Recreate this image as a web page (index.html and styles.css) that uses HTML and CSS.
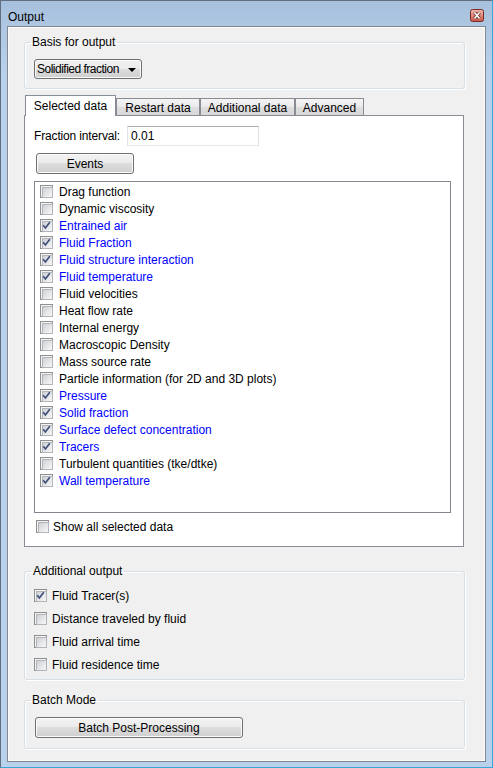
FILE: index.html
```html
<!DOCTYPE html>
<html>
<head>
<meta charset="utf-8">
<title>Output</title>
<link rel="stylesheet" href="styles.css">
</head>
<body>
<div class="window">
  <div class="titlebar">
    <span class="title">Output</span>
    <span class="close">
      <svg width="14" height="13" viewBox="0 0 14 13">
        <defs>
          <linearGradient id="cg" x1="0" y1="0" x2="0" y2="1">
            <stop offset="0" stop-color="#efb8ad"/>
            <stop offset="0.5" stop-color="#dd8a7d"/>
            <stop offset="1" stop-color="#c65446"/>
          </linearGradient>
        </defs>
        <rect x="0.5" y="0.5" width="13" height="12" rx="2" fill="url(#cg)" stroke="#7a2b22"/>
        <path d="M4.5 3.5 L9.5 9.5 M9.5 3.5 L4.5 9.5" stroke="#6a2a22" stroke-width="3.2"/>
        <path d="M4.5 3.5 L9.5 9.5 M9.5 3.5 L4.5 9.5" stroke="#ffffff" stroke-width="1.6"/>
      </svg>
    </span>
  </div>
  <div class="content">
    <fieldset class="group basis">
      <legend>Basis for output</legend>
      <div class="combo"><span class="combo-text">Solidified fraction</span><span class="arrow"></span></div>
    </fieldset>

    <div class="tabs">
      <div class="tab active t1">Selected data</div>
      <div class="tab t2">Restart data</div>
      <div class="tab t3">Additional data</div>
      <div class="tab t4">Advanced</div>
    </div>
    <div class="panel">
      <div class="field-row">
        <span class="label">Fraction interval:</span>
        <div class="input">0.01</div>
      </div>
      <button class="btn events">Events</button>
      <div class="list">
        <div class="item"><span class="cb"></span>Drag function</div>
        <div class="item"><span class="cb"></span>Dynamic viscosity</div>
        <div class="item on"><span class="cb"><svg class="tick" viewBox="0 0 13 13"><path d="M3.2 6.3 L5.4 9 L9.8 3.2"/></svg></span>Entrained air</div>
        <div class="item on"><span class="cb"><svg class="tick" viewBox="0 0 13 13"><path d="M3.2 6.3 L5.4 9 L9.8 3.2"/></svg></span>Fluid Fraction</div>
        <div class="item on"><span class="cb"><svg class="tick" viewBox="0 0 13 13"><path d="M3.2 6.3 L5.4 9 L9.8 3.2"/></svg></span>Fluid structure interaction</div>
        <div class="item on"><span class="cb"><svg class="tick" viewBox="0 0 13 13"><path d="M3.2 6.3 L5.4 9 L9.8 3.2"/></svg></span>Fluid temperature</div>
        <div class="item"><span class="cb"></span>Fluid velocities</div>
        <div class="item"><span class="cb"></span>Heat flow rate</div>
        <div class="item"><span class="cb"></span>Internal energy</div>
        <div class="item"><span class="cb"></span>Macroscopic Density</div>
        <div class="item"><span class="cb"></span>Mass source rate</div>
        <div class="item"><span class="cb"></span>Particle information (for 2D and 3D plots)</div>
        <div class="item on"><span class="cb"><svg class="tick" viewBox="0 0 13 13"><path d="M3.2 6.3 L5.4 9 L9.8 3.2"/></svg></span>Pressure</div>
        <div class="item on"><span class="cb"><svg class="tick" viewBox="0 0 13 13"><path d="M3.2 6.3 L5.4 9 L9.8 3.2"/></svg></span>Solid fraction</div>
        <div class="item on"><span class="cb"><svg class="tick" viewBox="0 0 13 13"><path d="M3.2 6.3 L5.4 9 L9.8 3.2"/></svg></span>Surface defect concentration</div>
        <div class="item on"><span class="cb"><svg class="tick" viewBox="0 0 13 13"><path d="M3.2 6.3 L5.4 9 L9.8 3.2"/></svg></span>Tracers</div>
        <div class="item"><span class="cb"></span>Turbulent quantities (tke/dtke)</div>
        <div class="item on"><span class="cb"><svg class="tick" viewBox="0 0 13 13"><path d="M3.2 6.3 L5.4 9 L9.8 3.2"/></svg></span>Wall temperature</div>
      </div>
      <div class="check show-all"><span class="cb"></span>Show all selected data</div>
    </div>

    <fieldset class="group additional">
      <legend>Additional output</legend>
      <div class="check"><span class="cb"><svg class="tick" viewBox="0 0 13 13"><path d="M3.2 6.3 L5.4 9 L9.8 3.2"/></svg></span>Fluid Tracer(s)</div>
      <div class="check"><span class="cb"></span>Distance traveled by fluid</div>
      <div class="check"><span class="cb"></span>Fluid arrival time</div>
      <div class="check"><span class="cb"></span>Fluid residence time</div>
    </fieldset>

    <fieldset class="group batch">
      <legend>Batch Mode</legend>
      <button class="btn batch-btn">Batch Post-Processing</button>
    </fieldset>
  </div>
</div>
</body>
</html>
```

FILE: styles.css
```css
* { box-sizing: border-box; }

body {
  margin: 0;
  font: 12px "Liberation Sans", Arial, sans-serif;
  color: #000;
}

.window {
  width: 493px;
  height: 768px;
  border: 1px solid;
  border-color: #5f6f80 #3aa6d6 #3aa6d6 #5f6f80;
  background: linear-gradient(#a7c0dd 0, #b9d1ea 70px, #b9d1ea 100%);
  display: flex;
  flex-direction: column;
}

.titlebar {
  height: 25px;
  flex: none;
  display: flex;
  justify-content: space-between;
  align-items: flex-start;
  padding: 0 8px 0 7px;
}

.title {
  margin-top: 9px;
  line-height: 14px;
  font-size: 12px;
}

.close {
  margin-top: 8px;
  width: 14px;
  height: 13px;
  display: block;
}
.close svg { display: block; }

.content {
  flex: none;
  height: 736px;
  margin: 0 6px 0 6px;
  border: 1px solid #828790;
  background: #f0f0f0;
  box-shadow: inset 0 0 0 1px #fbfbfb;
  padding: 0 20px 0 16px;
  display: flex;
  flex-direction: column;
}

.group {
  margin: 0;
  min-width: 0;
  border: 1px solid #d5dfe5;
  border-radius: 3px;
  box-shadow: inset 1px 1px 0 #fff, 1px 1px 0 #fff;
}

.group legend {
  padding: 0 2px;
  line-height: 14px;
}

.basis {
  margin-top: 8px;
  padding: 10px 0 9px 9px;
}
.basis legend { margin-left: -4px; }

.combo {
  width: 108px;
  height: 20px;
  border: 1px solid #707070;
  border-radius: 3px;
  background: linear-gradient(#f2f2f2 0, #ebebeb 50%, #dddddd 50%, #cfcfcf 100%);
  box-shadow: inset 0 0 0 1px #fafafa;
  display: flex;
  align-items: center;
  justify-content: space-between;
  padding: 0 5px 0 2px;
}

.combo-text {
  white-space: nowrap;
  letter-spacing: -0.5px;
}

.arrow {
  flex: none;
  width: 0;
  height: 0;
  border-left: 4px solid transparent;
  border-right: 4px solid transparent;
  border-top: 4px solid #000;
  margin-top: 1px;
}

.tabs {
  margin-top: 6px;
  display: flex;
  align-items: flex-end;
  padding-left: 1px;
}

.tab {
  height: 17px;
  border: 1px solid #898c95;
  border-bottom: none;
  background: linear-gradient(#f4f4f4 0, #eaeaea 50%, #dedede 51%, #d8d8d8 100%);
  display: flex;
  align-items: center;
  justify-content: center;
  padding-top: 1px;
  white-space: nowrap;
}

.tab.active {
  height: 21px;
  margin-bottom: -1px;
  background: #fff;
  position: relative;
  z-index: 1;
  padding-top: 0;
  padding-bottom: 1px;
}

.t1 { width: 91px; }
.t2 { width: 84px; }
.t3 { width: 95px; }
.t4 { width: 69px; }

.panel {
  height: 432px;
  margin-right: 1px;
  border: 1px solid #898c95;
  background: #fff;
  padding: 10px 9px 0 9px;
  display: flex;
  flex-direction: column;
}

.field-row {
  display: grid;
  grid-template-columns: 93px 132px;
  align-items: center;
  height: 20px;
}

.label {
  white-space: nowrap;
  letter-spacing: -0.15px;
}

.input {
  height: 20px;
  border: 1px solid;
  border-color: #abadb3 #dbdfe6 #e3e9ef #e2e3ea;
  background: #fff;
  padding-left: 3px;
  line-height: 18px;
}

.btn {
  font: inherit;
  color: #000;
  border: 1px solid #707070;
  border-radius: 3px;
  background: linear-gradient(#f2f2f2 0, #ebebeb 50%, #dddddd 50%, #cfcfcf 100%);
  box-shadow: inset 0 0 0 1px #fbfbfb;
  padding: 0;
  margin: 0;
  display: block;
}

.events {
  margin-top: 7px;
  margin-left: 2px;
  width: 98px;
  height: 21px;
}

.list {
  margin-top: 7px;
  width: 417px;
  height: 332px;
  border: 1px solid #828790;
  padding-top: 1px;
}

.item {
  height: 17px;
  display: flex;
  align-items: center;
  gap: 6px;
  padding-left: 5px;
}

.item.on { color: #0000ff; }

.cb {
  position: relative;
  flex: none;
  width: 13px;
  height: 13px;
  border: 1px solid #8e8f8f;
  background: #f4f4f4;
  padding: 1px;
}

.cb::before {
  content: "";
  display: block;
  width: 9px;
  height: 9px;
  border: 1px solid #b2b5ba;
  background: linear-gradient(135deg, #cdd0d5 0, #e6e7e9 55%, #f7f7f7 100%);
}

.tick {
  position: absolute;
  left: -1px;
  top: -1px;
  width: 13px;
  height: 13px;
}

.tick path {
  fill: none;
  stroke: #3f4f78;
  stroke-width: 1.7;
}

.check {
  height: 17px;
  display: flex;
  align-items: center;
  gap: 5px;
}

.show-all {
  margin-top: 5px;
  margin-left: 2px;
  gap: 4px;
}

.additional {
  margin-top: 17px;
  padding: 9px 0 6px 9px;
  display: flex;
  flex-direction: column;
  gap: 6px;
}
.additional legend { margin-left: -3px; }

.batch {
  margin-top: 13px;
  padding: 10px 0 10px 10px;
}
.batch legend { margin-left: -5px; }

.batch-btn {
  width: 208px;
  height: 21px;
}
```
